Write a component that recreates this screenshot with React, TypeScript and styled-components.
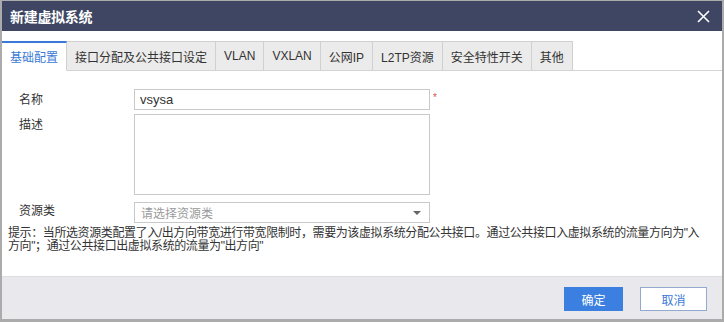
import React from "react";
import styled, { createGlobalStyle } from "styled-components";

const tabs = [
	"基础配置",
	"接口分配及公共接口设定",
	"VLAN",
	"VXLAN",
	"公网IP",
	"L2TP资源",
	"安全特性开关",
	"其他",
];

const App: React.FC = () => {
	return (
		<>
			<GlobalStyle />
			<Dialog>
				<Header>
					<Title>新建虚拟系统</Title>
					<CloseButton aria-label="close">
						<svg width="13" height="13" viewBox="0 0 13 13">
							<path d="M1 1L12 12M12 1L1 12" stroke="#fff" strokeWidth="1.6" />
						</svg>
					</CloseButton>
				</Header>

				<Body>
					<TabBar>
						{tabs.map((t, i) => (
							<Tab key={t} $active={i === 0}>
								{t}
							</Tab>
						))}
					</TabBar>

					<Form>
						<Label>名称</Label>
						<InputBox>vsysa</InputBox>
						<Required>*</Required>

						<Label $top>描述</Label>
						<TextArea />
						<span />

						<Label>资源类</Label>
						<SelectBox>
							<Placeholder>请选择资源类</Placeholder>
							<Arrow />
						</SelectBox>
						<span />
					</Form>

					<Hint>
						提示：当所选资源类配置了入/出方向带宽进行带宽限制时，需要为该虚拟系统分配公共接口。通过公共接口入虚拟系统的流量方向为"入方向"；通过公共接口出虚拟系统的流量为"出方向"
					</Hint>
				</Body>

				<Footer>
					<PrimaryButton>确定</PrimaryButton>
					<CancelButton>取消</CancelButton>
				</Footer>
			</Dialog>
		</>
	);
};

export default App;

const GlobalStyle = createGlobalStyle`
	html, body {
		margin: 0;
		padding: 0;
		background: #fff;
	}
	body {
		font-family: "Liberation Sans", "Noto Sans CJK SC", sans-serif;
		font-size: 12px;
		color: #333;
	}
`;

const Dialog = styled.div`
	width: 724px;
	height: 322px;
	box-sizing: border-box;
	border-style: solid;
	border-color: #ababab;
	border-width: 1px 2px 3px 2px;
	background: #fff;
	display: flex;
	flex-direction: column;
	overflow: hidden;
`;

const Header = styled.div`
	height: 30px;
	flex-shrink: 0;
	background: #3e4664;
	display: flex;
	align-items: center;
	justify-content: space-between;
	padding: 0 12px 0 8px;
`;

const Title = styled.div`
	color: #fff;
	font-size: 14px;
	font-weight: bold;
	letter-spacing: -0.3px;
	font-family: "Noto Sans CJK SC", sans-serif;
`;

const CloseButton = styled.div`
	width: 13px;
	height: 13px;
	display: flex;
	cursor: pointer;
`;

const Body = styled.div`
	flex: 1;
	padding-top: 10px;
	display: flex;
	flex-direction: column;
`;

const TabBar = styled.div`
	display: flex;
	height: 30px;
	box-sizing: border-box;
	border-bottom: 1px solid #d4d4d4;
`;

const Tab = styled.div<{ $active?: boolean }>`
	height: 30px;
	box-sizing: border-box;
	padding: 0 8px;
	display: flex;
	align-items: center;
	border: 1px solid #d0d0d0;
	border-left: none;
	border-top: ${({ $active }) => ($active ? "2px solid #3a7ad6" : "1px solid #d0d0d0")};
	border-bottom: ${({ $active }) => ($active ? "1px solid #fff" : "1px solid #d4d4d4")};
	background: ${({ $active }) => ($active ? "#fff" : "#ebebeb")};
	color: ${({ $active }) => ($active ? "#3a7ad6" : "#333")};
	font-size: 12px;
	white-space: nowrap;
	cursor: pointer;
`;

const Form = styled.div`
	display: grid;
	grid-template-columns: 115px 296px 20px;
	grid-template-rows: 21px 81px 21px;
	row-gap: 4px;
	padding: 18px 0 0 17px;

	& > :nth-child(n + 7) {
		margin-top: 3px;
	}
`;

const Label = styled.div<{ $top?: boolean }>`
	display: flex;
	align-items: ${({ $top }) => ($top ? "flex-start" : "center")};
	padding-top: ${({ $top }) => ($top ? "4px" : "0")};
	font-size: 12px;
	color: #333;
	line-height: 14px;
`;

const InputBox = styled.div`
	box-sizing: border-box;
	height: 21px;
	border: 1px solid #c9c9c9;
	padding: 0 5px;
	display: flex;
	align-items: center;
	font-size: 13px;
	color: #333;
`;

const Required = styled.span`
	color: #e05050;
	font-size: 10px;
	padding: 3px 0 0 3px;
`;

const TextArea = styled.div`
	box-sizing: border-box;
	height: 81px;
	border: 1px solid #c9c9c9;
`;

const SelectBox = styled.div`
	box-sizing: border-box;
	height: 21px;
	border: 1px solid #c9c9c9;
	padding: 0 8px 0 6px;
	display: flex;
	align-items: center;
	justify-content: space-between;
`;

const Placeholder = styled.span`
	color: #9a9a9a;
	font-size: 12px;
`;

const Arrow = styled.span`
	width: 0;
	height: 0;
	border-left: 4px solid transparent;
	border-right: 4px solid transparent;
	border-top: 4px solid #666;
`;

const Hint = styled.div`
	padding: 7px 18px 0 6px;
	font-size: 12px;
	line-height: 13px;
	letter-spacing: -0.4px;
	color: #333;
`;

const Footer = styled.div`
	height: 43px;
	flex-shrink: 0;
	box-sizing: border-box;
	background: #e9e9ed;
	border-top: 1px solid #dedee2;
	display: flex;
	justify-content: flex-end;
	align-items: flex-start;
	gap: 17px;
	padding: 10px 15px 0 0;
`;

const BaseButton = styled.div`
	height: 24px;
	box-sizing: border-box;
	display: flex;
	align-items: center;
	justify-content: center;
	font-size: 12px;
	cursor: pointer;
`;

const PrimaryButton = styled(BaseButton)`
	width: 59px;
	background: #3b7fe0;
	color: #fff;
`;

const CancelButton = styled(BaseButton)`
	width: 67px;
	background: #fff;
	border: 1px solid #93a9cf;
	color: #3a78d8;
`;
